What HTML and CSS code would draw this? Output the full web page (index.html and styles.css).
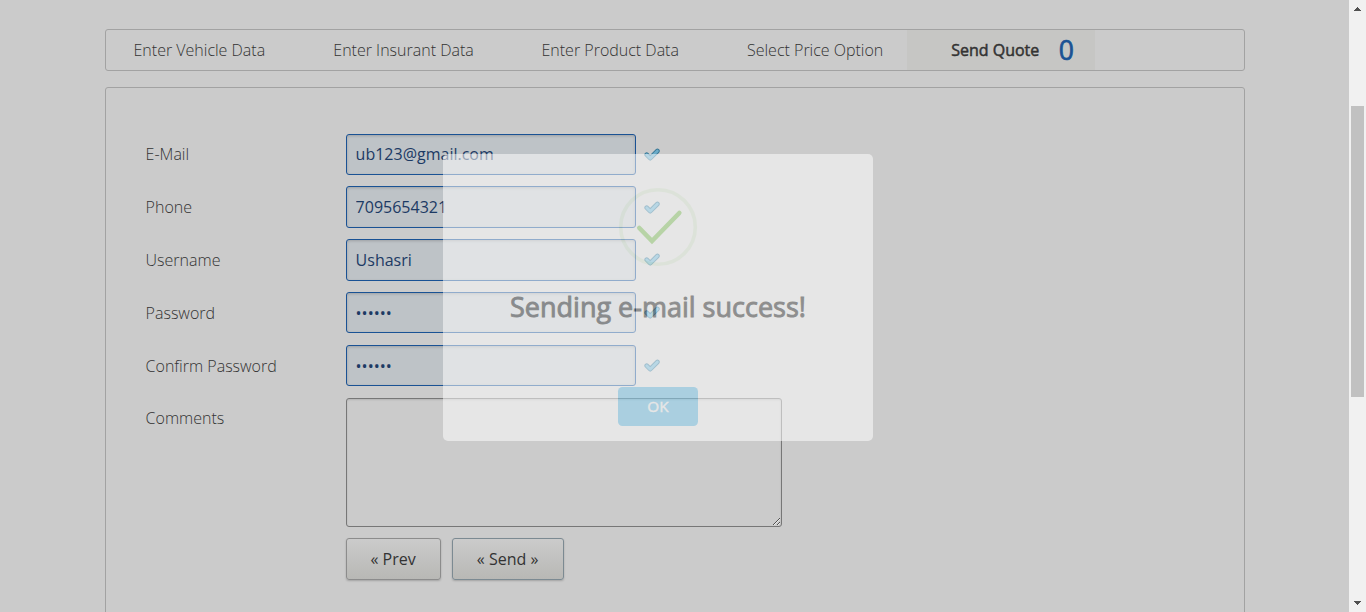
FILE: index.html
```html
<!DOCTYPE html>
<html lang="en">
<head>
<meta charset="utf-8">
<title>Send Quote</title>
<link rel="stylesheet" href="styles.css">
</head>
<body>
<div class="page">
  <main class="content">
    <nav class="steps">
      <a class="step step-vehicle">Enter Vehicle Data</a>
      <a class="step step-insurant">Enter Insurant Data</a>
      <a class="step step-product">Enter Product Data</a>
      <a class="step step-price">Select Price Option</a>
      <a class="step step-quote"><span class="quote-name">Send Quote</span><span class="counter">0</span></a>
    </nav>
    <form class="panel">
      <div class="row"><label>E-Mail</label><input class="field" type="text" value="ub123@gmail.com"><svg class="tick" viewBox="0 0 16 14"><path class="tick-edge" d="M2.7 6.7 6.2 10.2 13.4 3"/><path class="tick-fill" d="M2.7 6.7 6.2 10.2 13.4 3"/></svg></div>
      <div class="row"><label>Phone</label><input class="field" type="text" value="7095654321"><svg class="tick" viewBox="0 0 16 14"><path class="tick-edge" d="M2.7 6.7 6.2 10.2 13.4 3"/><path class="tick-fill" d="M2.7 6.7 6.2 10.2 13.4 3"/></svg></div>
      <div class="row"><label>Username</label><input class="field" type="text" value="Ushasri"><svg class="tick" viewBox="0 0 16 14"><path class="tick-edge" d="M2.7 6.7 6.2 10.2 13.4 3"/><path class="tick-fill" d="M2.7 6.7 6.2 10.2 13.4 3"/></svg></div>
      <div class="row"><label>Password</label><input class="field" type="password" value="secret"><svg class="tick" viewBox="0 0 16 14"><path class="tick-edge" d="M2.7 6.7 6.2 10.2 13.4 3"/><path class="tick-fill" d="M2.7 6.7 6.2 10.2 13.4 3"/></svg></div>
      <div class="row"><label>Confirm Password</label><input class="field" type="password" value="secret"><svg class="tick" viewBox="0 0 16 14"><path class="tick-edge" d="M2.7 6.7 6.2 10.2 13.4 3"/><path class="tick-fill" d="M2.7 6.7 6.2 10.2 13.4 3"/></svg></div>
      <div class="row row-comments"><label>Comments</label><textarea class="comments"></textarea></div>
      <div class="actions"><button type="button" class="btn">« Prev</button><button type="button" class="btn btn-send">« Send »</button></div>
    </form>
  </main>
  <div class="scrollbar">
    <svg class="arrow" viewBox="0 0 17 17"><path d="M5 11h7v-1h-1V9h-1V8H9V7H8v1H7v1H6v1H5z"/></svg>
    <div class="thumb"></div>
    <svg class="arrow arrow-down" viewBox="0 0 17 17"><path d="M5 6h7v1h-1v1h-1v1H9v1H8V9H7V8H6V7H5z"/></svg>
  </div>
</div>
<div class="dialog">
  <svg class="success" viewBox="0 0 80 80"><circle cx="40" cy="40" r="37.3"/><path d="M21.3 41 34 54 61.3 26"/></svg>
  <h2 class="title">Sending e-mail success!</h2>
  <button type="button" class="ok">OK</button>
</div>
</body>
</html>
```
FILE: styles.css
```css
* { box-sizing: border-box; }
body {
  margin: 0;
  height: 612px;
  overflow: hidden;
  background: #cbcbcb;
  color: #333;
  font: 300 16px/24px "Open Sans", sans-serif;
}
.page { display: flex; height: 612px; }
.content { flex: 1; height: 612px; padding: 29px 104px 0 105px; overflow: hidden; }
.steps {
  display: flex;
  height: 42px;
  border: 1px solid #a2a2a2;
  border-radius: 3px;
}
.step { display: flex; align-items: center; white-space: nowrap; }
.step-vehicle { width: 199.5px; padding-left: 27.5px; }
.step-insurant { width: 208.2px; padding-left: 27.8px; }
.step-product { width: 205.3px; padding-left: 27.8px; }
.step-price { width: 188px; padding-left: 28px; }
.step-quote { width: 188px; padding-left: 44.2px; background: #c6c6c4; font-weight: 400; }
.quote-name { width: 107.5px; -webkit-text-stroke: .5px #333; }
.counter { margin-top: -1px; color: #1a5294; font-size: 26.5px; -webkit-text-stroke: .7px #1a5294; }
.panel {
  height: 560px;
  margin-top: 16px;
  padding: 45.6px 39.6px 0;
  border: 1px solid #a2a2a2;
  border-radius: 3px;
}
.row { display: flex; align-items: center; height: 41.4px; margin-bottom: 11.45px; }
.row label { width: 200px; }
.field {
  width: 290px;
  height: 41.4px;
  padding: 0 9px;
  border: 1px solid #1a5294;
  border-radius: 3px;
  background: #bec3c7;
  box-shadow: inset 0 1px 3px rgba(0, 0, 0, .18);
  color: #1c3a64;
  font: 400 16px "Open Sans", sans-serif;
}
.tick { width: 16px; height: 14px; margin: 1px 0 0 8px; fill: none; stroke-linecap: round; stroke-linejoin: round; }
.tick-edge { stroke: #3a7896; stroke-width: 4.6; }
.tick-fill { stroke: #6bacc9; stroke-width: 2.8; }
.row-comments { height: 129px; margin-top: 11.6px; margin-bottom: 11px; align-items: flex-start; }
.row-comments label { padding-top: 8px; }
.comments {
  width: 436px;
  height: 129px;
  border: 1px solid #777;
  border-radius: 3px;
  background: #cbcbcb;
  box-shadow: inset 0 1px 2px rgba(0, 0, 0, .12);
}
.row:has(+ .row-comments) { margin-bottom: 0; }
.actions { display: flex; gap: 11px; padding-left: 200px; }
.btn {
  width: 95px;
  height: 42px;
  padding: 0;
  border: 1px solid #8c8c8c;
  border-radius: 3px;
  background: linear-gradient(#cbcbcb, #b8b8b5);
  box-shadow: 0 1px 2px rgba(0, 0, 0, .2);
  color: #333;
  font: 400 16px "Open Sans", sans-serif;
}
.btn-send { width: 112px; border-color: #7c8a92; }
.scrollbar { display: flex; flex-direction: column; align-items: center; width: 17px; background: #f1f1f1; }
.arrow { width: 17px; height: 17px; fill: #505050; shape-rendering: crispEdges; }
.arrow-down { margin-top: auto; }
.thumb { width: 13px; height: 291px; margin-top: 89px; background: #c1c1c1; }
.dialog {
  position: absolute;
  left: 442.7px;
  top: 153.6px;
  display: flex;
  flex-direction: column;
  align-items: center;
  width: 430.6px;
  height: 287.4px;
  padding-top: 33.4px;
  border-radius: 5px;
  background: #fff;
  opacity: .52;
}
.success { width: 80px; height: 80px; fill: none; }
.success circle { stroke: rgba(165, 220, 134, .2); stroke-width: 3.6; }
.success path { stroke: #a5dc86; stroke-width: 4.6; stroke-linecap: round; }
.title { margin: 22px 0 0; color: #575757; font: 400 27px/36px "Open Sans", sans-serif; -webkit-text-stroke: .9px #575757; white-space: nowrap; }
.ok {
  width: 79.4px;
  height: 39px;
  margin-top: 62px;
  padding: 0;
  border: 0;
  border-radius: 4.5px;
  background: #8cd4f5;
  color: #fff;
  font: 400 15.3px "Open Sans", sans-serif;
  -webkit-text-stroke: .4px #fff;
}
```
